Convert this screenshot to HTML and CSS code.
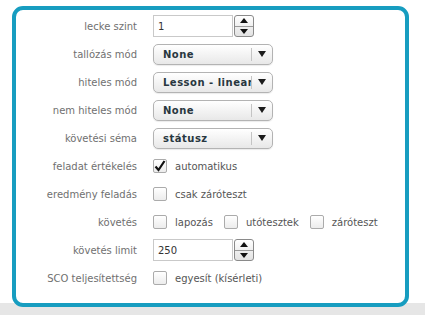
FILE: index.html
```html
<!DOCTYPE html>
<html lang="hu">
<head>
  <meta charset="UTF-8">
  <meta name="viewport" content="width=device-width, initial-scale=1.0">
  <title>Beállítások</title>
  <link rel="stylesheet" href="styles.css">
</head>
<body>
  <div class="panel">
    <label class="name">lecke szint</label>
    <div class="number">
      <input type="text" value="1">
      <span class="spin"><span class="up"></span><span class="down"></span></span>
    </div>

    <label class="name">tallózás mód</label>
    <div class="select"><span class="value">None</span><span class="arrow"></span></div>

    <label class="name">hiteles mód</label>
    <div class="select"><span class="value">Lesson - linear</span><span class="arrow"></span></div>

    <label class="name">nem hiteles mód</label>
    <div class="select"><span class="value">None</span><span class="arrow"></span></div>

    <label class="name">követési séma</label>
    <div class="select"><span class="value">státusz</span><span class="arrow"></span></div>

    <label class="name">feladat értékelés</label>
    <div class="checks">
      <span class="check checked">
        <svg width="12" height="12" viewBox="0 0 12 12"><path d="M1.5 6.5 L4.5 10 L10.5 1" fill="none" stroke="#111" stroke-width="2.2"/></svg>
      </span>
      <span class="text">automatikus</span>
    </div>

    <label class="name">eredmény feladás</label>
    <div class="checks">
      <span class="check"></span><span class="text">csak záróteszt</span>
    </div>

    <label class="name">követés</label>
    <div class="checks">
      <span class="check"></span><span class="text">lapozás</span>
      <span class="check"></span><span class="text">utótesztek</span>
      <span class="check"></span><span class="text">záróteszt</span>
    </div>

    <label class="name">követés limit</label>
    <div class="number">
      <input type="text" value="250">
      <span class="spin"><span class="up"></span><span class="down"></span></span>
    </div>

    <label class="name">SCO teljesítettség</label>
    <div class="checks">
      <span class="check"></span><span class="text">egyesít (kísérleti)</span>
    </div>
  </div>
</body>
</html>
```

FILE: styles.css
```css
/* settings panel */
html {
  min-height: 100%;
}
body {
  margin: 0;
  min-height: 315px;
  font-family: "DejaVu Sans", Verdana, sans-serif;
  font-size: 10px;
  background: linear-gradient(to bottom, #fff 303px, #e6e6e6 303px);
}
.panel {
  margin: 6px 16px 0 12px;
  height: 301px;
  box-sizing: border-box;
  border: 4px solid #179dc0;
  border-radius: 11px;
  background: #fff;
  padding: 2px 0 12px 0;
  display: grid;
  grid-template-columns: 121px 1fr;
  grid-auto-rows: 28px;
  column-gap: 16px;
  align-items: center;
}
.name {
  text-align: right;
  color: #707070;
}

/* number input with spinner */
.number {
  display: flex;
  height: 22px;
}
.number input {
  width: 80px;
  height: 22px;
  box-sizing: border-box;
  border: 1px solid #c9c9c9;
  padding: 0 0 0 4px;
  margin: 0;
  font-family: "DejaVu Sans", Verdana, sans-serif;
  font-size: 10px;
  color: #333;
  outline: none;
}
.spin {
  width: 20px;
  height: 22px;
  box-sizing: border-box;
  margin-left: 1px;
  border: 1px solid #8a8a8a;
  border-radius: 3px;
  display: flex;
  flex-direction: column;
  background: linear-gradient(#fff, #e2e2e2);
}
.spin .up,
.spin .down {
  flex: 1;
  display: flex;
  align-items: center;
  justify-content: center;
}
.spin .up {
  border-bottom: 1px solid #9a9a9a;
}
.spin .up::after {
  content: "";
  border-left: 4px solid transparent;
  border-right: 4px solid transparent;
  border-bottom: 5px solid #111;
}
.spin .down::after {
  content: "";
  border-left: 4px solid transparent;
  border-right: 4px solid transparent;
  border-top: 5px solid #111;
}

/* dropdowns */
.select {
  width: 120px;
  height: 21px;
  box-sizing: border-box;
  border: 1px solid #b3b3b3;
  border-radius: 5px;
  background: linear-gradient(#fff, #e8e8e8);
  box-shadow: 0 1px 1px rgba(0, 0, 0, 0.08);
  display: flex;
  align-items: center;
}
.select .value {
  flex: 1;
  padding-left: 9px;
  overflow: hidden;
  white-space: nowrap;
  font-weight: bold;
  letter-spacing: 0.5px;
  color: #283740;
}
.select .arrow {
  width: 20px;
  height: 13px;
  border-left: 1px solid #c4c4c4;
  display: flex;
  align-items: center;
  justify-content: center;
}
.select .arrow::after {
  content: "";
  border-left: 4px solid transparent;
  border-right: 4px solid transparent;
  border-top: 6px solid #1c1c1c;
}

/* checkboxes */
.checks {
  display: flex;
  align-items: center;
}
.check {
  width: 14px;
  height: 14px;
  box-sizing: border-box;
  border: 1px solid #ababab;
  border-radius: 2px;
  background: linear-gradient(#fff, #ececec);
  display: flex;
  align-items: center;
  justify-content: center;
}
.check svg {
  display: block;
}
.checks .text {
  margin: 0 11px 0 8px;
  color: #555;
}
```
